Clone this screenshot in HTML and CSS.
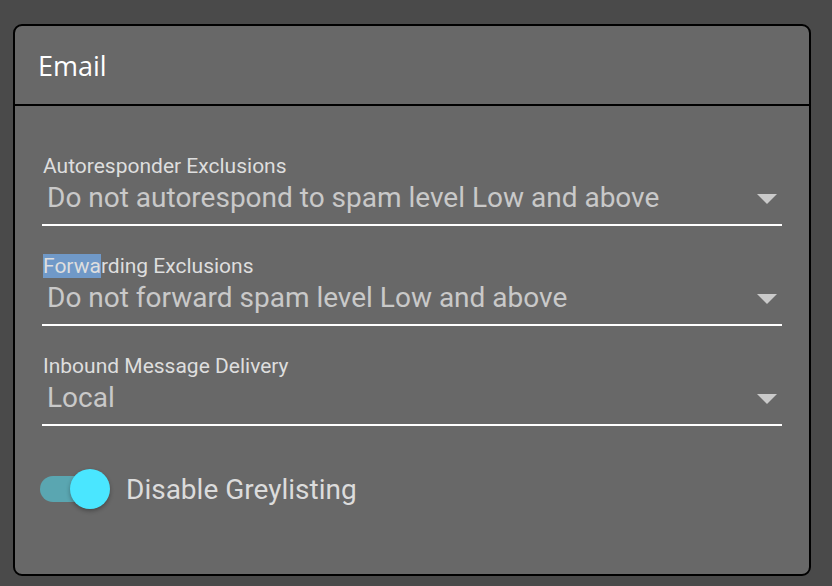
FILE: index.html
```html
<!DOCTYPE html>
<html>
<head>
<meta charset="utf-8">
<link rel="stylesheet" href="styles.css">
</head>
<body>
<div class="card">
  <div class="card-header"><span class="title">Email</span></div>
  <div class="card-body">
    <div class="field">
      <div class="label">Autoresponder Exclusions</div>
      <div class="select"><span class="value">Do not autorespond to spam level Low and above</span><span class="arrow"></span></div>
    </div>
    <div class="field">
      <div class="label"><span class="sel">Forwa</span>rding Exclusions</div>
      <div class="select"><span class="value">Do not forward spam level Low and above</span><span class="arrow"></span></div>
    </div>
    <div class="field">
      <div class="label">Inbound Message Delivery</div>
      <div class="select"><span class="value">Local</span><span class="arrow"></span></div>
    </div>
    <div class="switch-row">
      <div class="switch"><div class="track"></div><div class="thumb"></div></div>
      <span class="switch-label">Disable Greylisting</span>
    </div>
  </div>
</div>
</body>
</html>
```
FILE: styles.css
```css
html, body {
  margin: 0;
  padding: 0;
  background: #4a4a4a;
}
body {
  padding: 24px 21px 10px 13px;
  font-family: Roboto, "Liberation Sans", sans-serif;
}
.card {
  box-sizing: border-box;
  width: 798px;
  height: 552px;
  background: #686868;
  border: 2px solid #000;
  border-radius: 9px;
}
.card-header {
  height: 80px;
  border-bottom: 2px solid #000;
  display: flex;
  align-items: center;
  padding-left: 23px;
  padding-top: 1px;
  box-sizing: border-box;
}
.title {
  font-family: "Open Sans", sans-serif;
  font-size: 27px;
  color: #fff;
}
.card-body {
  padding: 48px 27px 0 27px;
  display: flex;
  flex-direction: column;
}
.field {
  margin-bottom: 28px;
}
.label {
  font-size: 21px;
  line-height: 24px;
  color: #dedede;
  padding-left: 1px;
}
.sel {
  background: #7099c8;
}
.select {
  margin-top: 4px;
  display: flex;
  align-items: center;
  justify-content: space-between;
  border-bottom: 2px solid #fff;
  padding: 0 5px 10px 5px;
}
.value {
  font-size: 28px;
  line-height: 32px;
  color: #c9c9c9;
}
.arrow {
  width: 0;
  height: 0;
  border-left: 10px solid transparent;
  border-right: 10px solid transparent;
  border-top: 10px solid #cacaca;
  margin-top: 2px;
}
.switch-row {
  margin-top: 15px;
  display: flex;
  align-items: center;
  margin-left: -2px;
}
.switch {
  position: relative;
  width: 70px;
  height: 40px;
}
.track {
  position: absolute;
  left: 0;
  top: 7px;
  width: 62px;
  height: 26px;
  border-radius: 13px;
  background: #5aa6b1;
}
.thumb {
  position: absolute;
  left: 30px;
  top: 0;
  width: 40px;
  height: 40px;
  border-radius: 50%;
  background: #4ae6ff;
  box-shadow: 0 2px 4px rgba(0,0,0,0.3);
}
.switch-label {
  margin-left: 16px;
  font-size: 28px;
  color: #dcdcdc;
}
```
